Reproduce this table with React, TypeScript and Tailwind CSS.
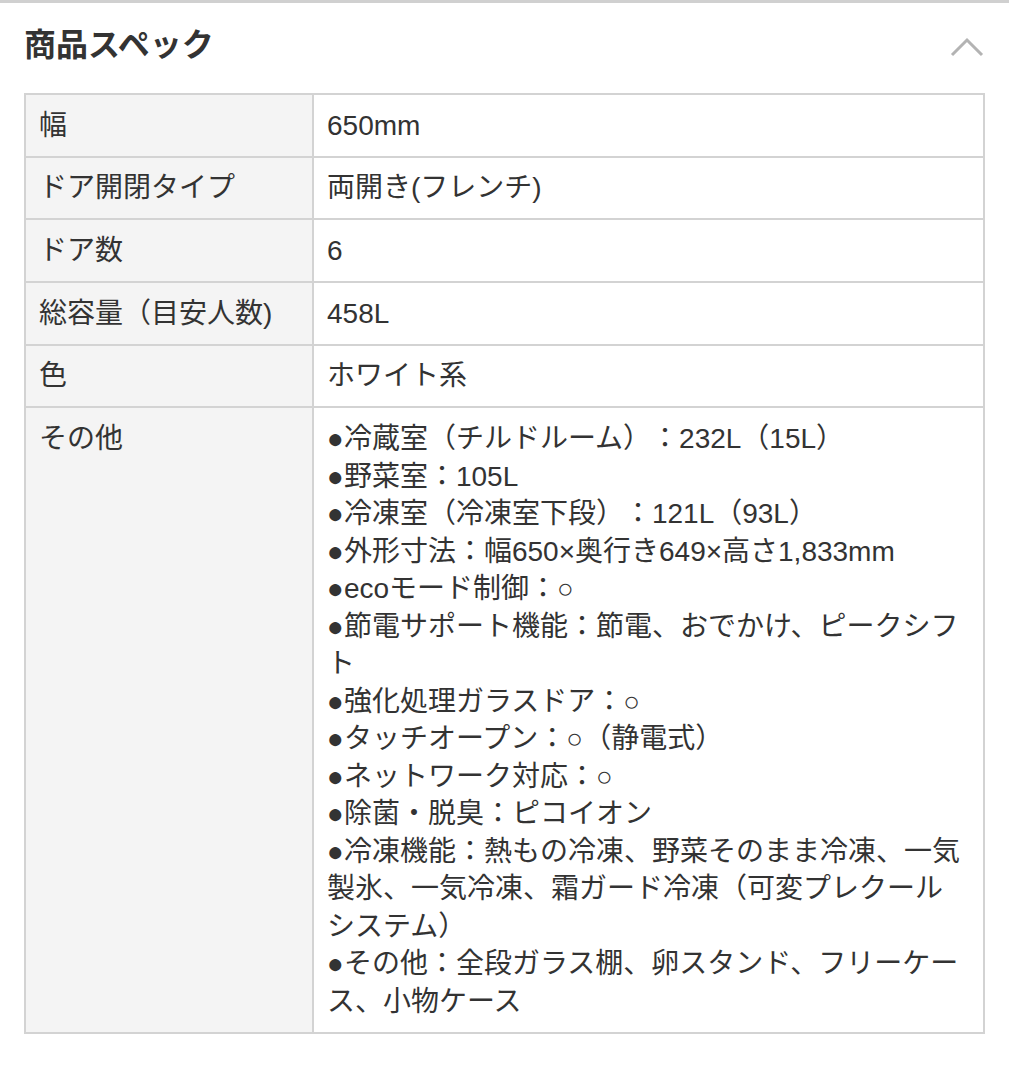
import React from "react";

const rows: { k: string; v: string[] }[] = [
  { k: "幅", v: ["650mm"] },
  { k: "ドア開閉タイプ", v: ["両開き(フレンチ)"] },
  { k: "ドア数", v: ["6"] },
  { k: "総容量（目安人数)", v: ["458L"] },
  { k: "色", v: ["ホワイト系"] },
  {
    k: "その他",
    v: [
      "●冷蔵室（チルドルーム）：232L（15L）",
      "●野菜室：105L",
      "●冷凍室（冷凍室下段）：121L（93L）",
      "●外形寸法：幅650×奥行き649×高さ1,833mm",
      "●ecoモード制御：○",
      "●節電サポート機能：節電、おでかけ、ピークシフト",
      "●強化処理ガラスドア：○",
      "●タッチオープン：○（静電式）",
      "●ネットワーク対応：○",
      "●除菌・脱臭：ピコイオン",
      "●冷凍機能：熱もの冷凍、野菜そのまま冷凍、一気製氷、一気冷凍、霜ガード冷凍（可変プレクールシステム）",
      "●その他：全段ガラス棚、卵スタンド、フリーケース、小物ケース",
    ],
  },
];

export default function App() {
  return (
    <div
      className="w-[1009px] min-h-[1080px] bg-white text-[#333] [text-spacing-trim:space-all]"
      style={{ fontFamily: '"Liberation Sans", "Noto Sans CJK JP", sans-serif' }}
    >
      <div className="border-t-[3px] border-[#d0d0d0]" />
      <div className="flex h-[84px] items-center justify-between px-6">
        <h2 className="text-[32px] font-bold leading-none text-[#333]">商品スペック</h2>
        <svg width="34" height="20" viewBox="0 0 34 20" className="mr-[1px] mt-[4px]">
          <polyline
            points="2,18 17,3 32,18"
            fill="none"
            stroke="#b3b3b3"
            strokeWidth="3"
          />
        </svg>
      </div>
      <div className="mx-6 mt-[6px]">
        <table className="w-full border-collapse border-2 border-[#d3d3d3] text-[28px] leading-[37.5px]">
          <tbody>
            {rows.map((r) => (
              <tr key={r.k}>
                <td className="w-[288px] border-2 border-[#d3d3d3] bg-[#f4f4f4] px-[13px] py-[11.6px] align-top">
                  {r.k}
                </td>
                <td className="border-2 border-[#d3d3d3] bg-white px-[13px] py-[11.6px] align-top">
                  {r.v.map((line, i) => (
                    <div key={i}>{line}</div>
                  ))}
                </td>
              </tr>
            ))}
          </tbody>
        </table>
      </div>
    </div>
  );
}
